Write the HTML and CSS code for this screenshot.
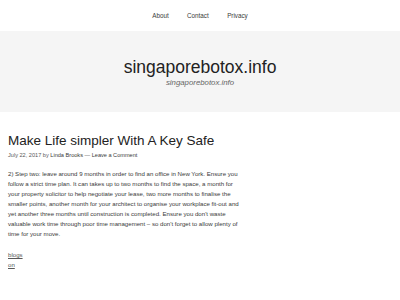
FILE: index.html
```html
<!DOCTYPE html>
<html lang="en">
<head>
<meta charset="utf-8">
<title>singaporebotox.info</title>
<link rel="stylesheet" href="styles.css">
</head>
<body>
<nav class="topnav">
  <a href="#">About</a>
  <a href="#">Contact</a>
  <a href="#">Privacy</a>
</nav>
<header class="site-header">
  <p class="site-title">singaporebotox.info</p>
  <p class="site-tagline">singaporebotox.info</p>
</header>
<main class="content">
  <h1 class="entry-title">Make Life simpler With A Key Safe</h1>
  <div class="entry-meta">July 22, 2017 by <a href="#">Linda Brooks</a> — <a href="#">Leave a Comment</a></div>
  <p class="entry-text">2) Step two: leave around 9 months in order to find an office in New York. Ensure you follow a strict time plan. It can takes up to two months to find the space, a month for your property solicitor to help negotiate your lease, two more months to finalise the smaller points, another month for your architect to organise your workplace fit-out and yet another three months until construction is completed. Ensure you don't waste valuable work time through poor time management – so don't forget to allow plenty of time for your move.</p>
  <div class="entry-links">
    <a href="#">blogs</a>
    <a href="#">on</a>
  </div>
</main>
</body>
</html>
```

FILE: styles.css
```css
html, body {
  margin: 0;
  padding: 0;
  background: #ffffff;
  font-family: "Liberation Sans", Arial, sans-serif;
  color: #3a3a3a;
}
a { color: inherit; text-decoration: none; }
p { margin: 0; }

.topnav {
  height: 31px;
  display: flex;
  justify-content: center;
  align-items: center;
  font-size: 6.3px;
}
.topnav a {
  padding: 0 9.2px;
  color: #3a3a3a;
  line-height: 10px;
}

.site-header {
  background: #f5f5f5;
  text-align: center;
  padding: 25.7px 0 24px;
}
.site-title {
  font-size: 17.5px;
  line-height: 20px;
  color: #222222;
}
.site-tagline {
  margin-top: 1.5px;
  font-size: 7.8px;
  line-height: 10px;
  font-style: italic;
  color: #666666;
}

.content {
  padding: 20.5px 8px 0;
}
.entry-title {
  margin: 0;
  font-size: 13.5px;
  line-height: 16px;
  font-weight: normal;
  color: #222222;
}
.entry-meta {
  margin-top: 2.5px;
  font-size: 5.6px;
  line-height: 8px;
  color: #595959;
}
.entry-meta a { color: #3a3a3a; }
.entry-text {
  margin-top: 10px;
  max-width: 236px;
  font-size: 6.1px;
  line-height: 10px;
}
.entry-links {
  margin-top: 11px;
  display: flex;
  flex-direction: column;
  font-size: 6.1px;
  line-height: 10px;
}
.entry-links a {
  align-self: flex-start;
  text-decoration: underline;
  color: #595959;
}
```
